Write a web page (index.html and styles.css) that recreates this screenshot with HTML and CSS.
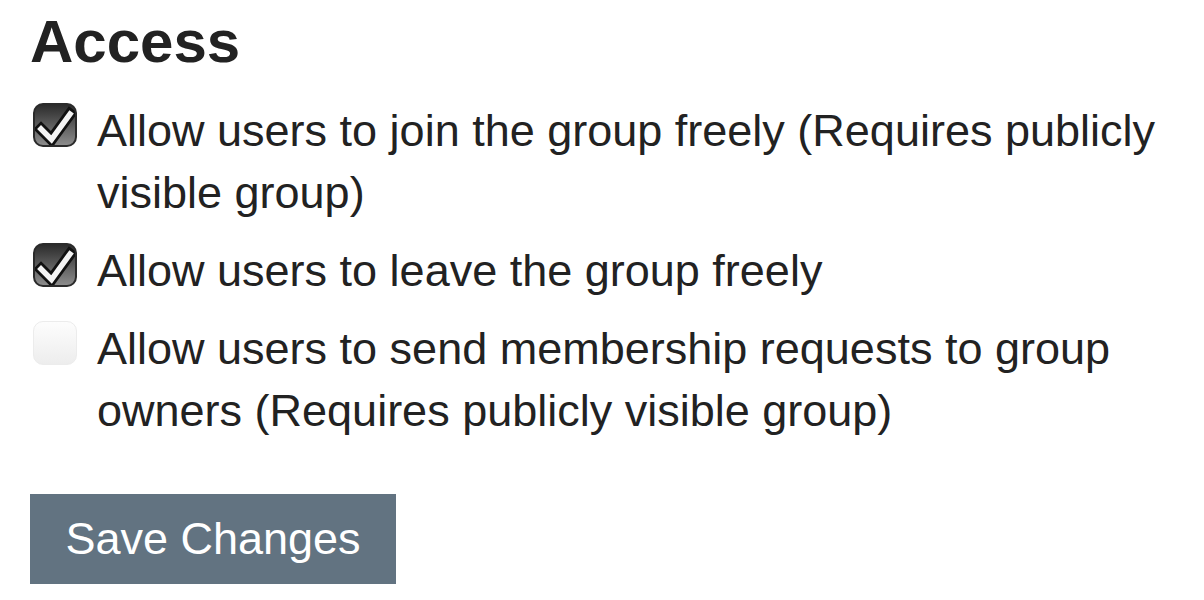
FILE: index.html
```html
<!DOCTYPE html>
<html lang="en">
<head>
<meta charset="utf-8">
<title>Access</title>
<link rel="stylesheet" href="styles.css">
</head>
<body>
<main class="panel">
  <h2 class="title">Access</h2>
  <ul class="options">
    <li class="option">
      <span class="box checked">
        <svg viewBox="0 0 44 44" width="44" height="44" aria-hidden="true">
          <polyline points="8,26 18.5,36.5 37,11" fill="none" stroke="#111" stroke-width="11" stroke-linejoin="miter" stroke-linecap="square"/>
          <polyline points="8,26 18.5,36.5 37,11" fill="none" stroke="#f4f4f4" stroke-width="5.5" stroke-linejoin="miter" stroke-linecap="square"/>
        </svg>
      </span>
      <span class="label">Allow users to join the group freely (Requires publicly visible group)</span>
    </li>
    <li class="option">
      <span class="box checked">
        <svg viewBox="0 0 44 44" width="44" height="44" aria-hidden="true">
          <polyline points="8,26 18.5,36.5 37,11" fill="none" stroke="#111" stroke-width="11" stroke-linejoin="miter" stroke-linecap="square"/>
          <polyline points="8,26 18.5,36.5 37,11" fill="none" stroke="#f4f4f4" stroke-width="5.5" stroke-linejoin="miter" stroke-linecap="square"/>
        </svg>
      </span>
      <span class="label">Allow users to leave the group freely</span>
    </li>
    <li class="option">
      <span class="box"></span>
      <span class="label">Allow users to send membership requests to group owners (Requires publicly visible group)</span>
    </li>
  </ul>
  <button class="save" type="button">Save Changes</button>
</main>
</body>
</html>
```
FILE: styles.css
```css
* { box-sizing: border-box; }
html, body { margin: 0; padding: 0; background: #fff; }
body {
  font-family: "Liberation Sans", Arial, Helvetica, sans-serif;
  color: #222;
}
.panel {
  padding: 7px 30px 0 30px;
  width: 1204px;
}
.title {
  margin: 0;
  font-size: 60px;
  line-height: 70px;
  font-weight: bold;
  color: #222;
}
.options {
  list-style: none;
  margin: 23px 0 0 0;
  padding: 0;
  display: flex;
  flex-direction: column;
  gap: 16px;
}
.option {
  display: flex;
  align-items: flex-start;
  gap: 20px;
  font-size: 45px;
  line-height: 62px;
}
.box {
  flex: 0 0 44px;
  width: 44px;
  height: 44px;
  margin: 3px 0 0 3px;
  border-radius: 10px;
  border: 1px solid #ececec;
  background: linear-gradient(#fdfdfd, #ededed);
  position: relative;
  overflow: hidden;
}
.box.checked {
  border: 2px solid #2b2b2b;
  background: linear-gradient(#2c2c2c, #8c8c8c);
}
.box svg {
  position: absolute;
  left: -2px;
  top: -2px;
}
.label { flex: 1; }
.save {
  margin-top: 52px;
  width: 366px;
  height: 90px;
  border: 0;
  padding: 0;
  background: #627381;
  color: #fff;
  font-family: "Liberation Sans", Arial, Helvetica, sans-serif;
  font-size: 45px;
  text-align: center;
}
```
